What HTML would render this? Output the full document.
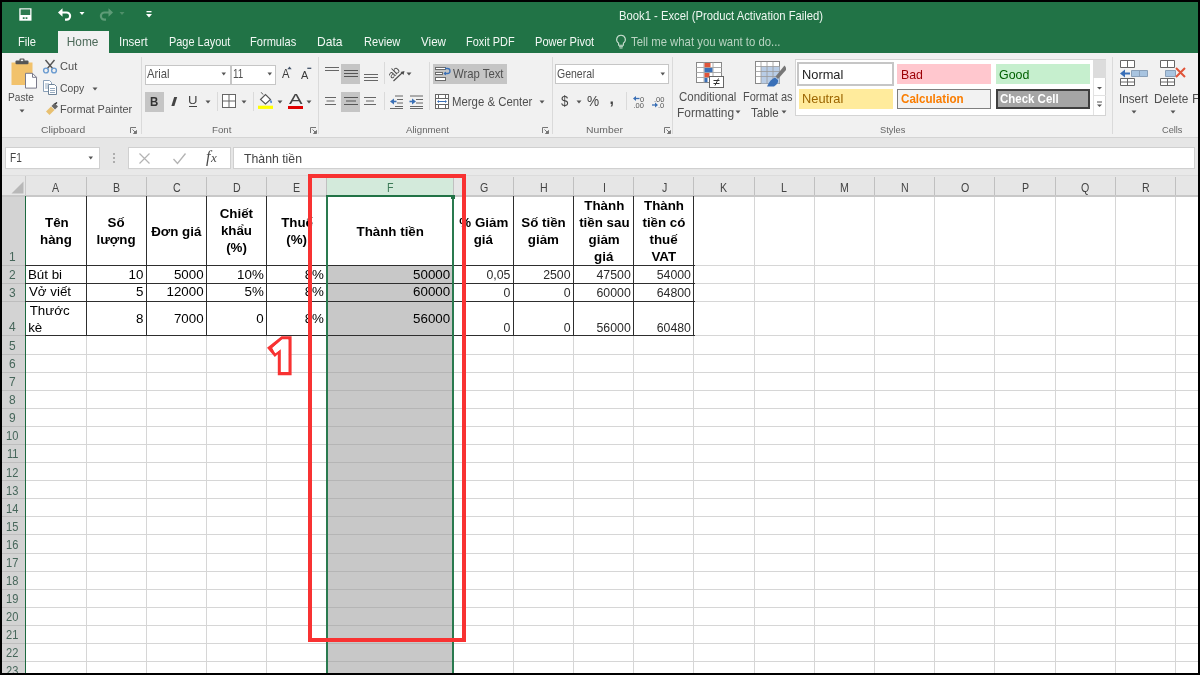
<!DOCTYPE html><html><head><meta charset="utf-8"><style>
html,body{margin:0;padding:0;}
body{width:1200px;height:675px;position:relative;overflow:hidden;background:#fff;font-family:"Liberation Sans",sans-serif;}
body>*{position:absolute;}
body{will-change:transform;}
span{white-space:pre;display:block;}
</style></head><body>
<div style="left:0px;top:0px;width:1200px;height:52.5px;background:#217346;"></div>
<div style="left:58px;top:31px;width:51px;height:22px;background:#f1f1f1;"></div>
<div style="left:0px;top:52.5px;width:1200px;height:84.5px;background:#f1f1f1;"></div>
<div style="left:0px;top:136.5px;width:1200px;height:1.2px;background:#d4d4d4;"></div>
<div style="left:0px;top:137.7px;width:1200px;height:37.3px;background:#e6e6e6;"></div>
<span style="left:619.10px;top:10px;font-size:12.03px;line-height:12.03px;color:#eef7f1;transform:scaleX(0.9375);transform-origin:0 0;">Book1 - Excel (Product Activation Failed)</span>
<span style="left:17.81px;top:37px;font-size:11.88px;line-height:11.88px;color:#f2f8f4;transform:scaleX(0.9406);transform-origin:0 0;">File</span>
<span style="left:118.96px;top:37px;font-size:11.88px;line-height:11.88px;color:#f2f8f4;transform:scaleX(0.9692);transform-origin:0 0;">Insert</span>
<span style="left:168.62px;top:37px;font-size:11.88px;line-height:11.88px;color:#f2f8f4;transform:scaleX(0.9206);transform-origin:0 0;">Page Layout</span>
<span style="left:250.11px;top:37px;font-size:11.88px;line-height:11.88px;color:#f2f8f4;transform:scaleX(0.9338);transform-origin:0 0;">Formulas</span>
<span style="left:317.03px;top:37px;font-size:11.88px;line-height:11.88px;color:#f2f8f4;transform:scaleX(1.0156);transform-origin:0 0;">Data</span>
<span style="left:363.61px;top:37px;font-size:11.88px;line-height:11.88px;color:#f2f8f4;transform:scaleX(0.9335);transform-origin:0 0;">Review</span>
<span style="left:420.94px;top:37px;font-size:11.88px;line-height:11.88px;color:#f2f8f4;transform:scaleX(0.9807);transform-origin:0 0;">View</span>
<span style="left:465.83px;top:37px;font-size:11.88px;line-height:11.88px;color:#f2f8f4;transform:scaleX(0.9203);transform-origin:0 0;">Foxit PDF</span>
<span style="left:534.81px;top:37px;font-size:11.88px;line-height:11.88px;color:#f2f8f4;transform:scaleX(0.9344);transform-origin:0 0;">Power Pivot</span>
<span style="left:66.75px;top:37px;font-size:11.88px;line-height:11.88px;color:#4d6a5a;">Home</span>
<span style="left:631.47px;top:37px;font-size:11.88px;line-height:11.88px;color:#b9d4c2;transform:scaleX(0.9555);transform-origin:0 0;">Tell me what you want to do...</span>
<svg style="left:18.5px;top:7.5px" width="13" height="13" viewBox="0 0 13 13"><rect x="0.3" y="0.3" width="12.2" height="12.4" fill="#fff"/><rect x="1.6" y="1.4" width="9.6" height="5.6" fill="#2e7a50"/><rect x="3.8" y="9.3" width="1.8" height="1.6" fill="#217346"/><rect x="6.6" y="9.3" width="1.8" height="1.6" fill="#217346"/></svg>
<svg style="left:57px;top:7px" width="17" height="14" viewBox="0 0 17 14"><path d="M3 5.5h6.5a3.6 3.6 0 0 1 0 7.2h-1.5" fill="none" stroke="#fff" stroke-width="2.2"/><path d="M1 5.5l4.5-4.2v8.4z" fill="#fff"/></svg>
<svg style="left:79px;top:11px" width="7" height="5" viewBox="0 0 7 5"><path d="M0.5 1h5l-2.5 3z" fill="#fff"/></svg>
<svg style="left:97px;top:7px" width="17" height="14" viewBox="0 0 17 14"><path d="M14 5.5h-6.5a3.6 3.6 0 0 0 0 7.2h1.5" fill="none" stroke="#5e9b77" stroke-width="2.2"/><path d="M16 5.5l-4.5-4.2v8.4z" fill="#5e9b77"/></svg>
<svg style="left:119px;top:11px" width="7" height="5" viewBox="0 0 7 5"><path d="M0.5 1h5l-2.5 3z" fill="#4f8f69"/></svg>
<svg style="left:145px;top:10px" width="8" height="8" viewBox="0 0 8 8"><rect x="1.5" y="1" width="5" height="1.3" fill="#fff"/><path d="M1 4h6l-3 3.5z" fill="#fff"/></svg>
<svg style="left:615px;top:34px" width="12" height="15" viewBox="0 0 12 15"><path d="M6 1.2a4.3 4.3 0 0 0-2.4 7.9v2.2h4.8V9.1A4.3 4.3 0 0 0 6 1.2z" fill="none" stroke="#c9dfd0" stroke-width="1.1"/><path d="M4 12.7h4M4.5 14h3" stroke="#c9dfd0" stroke-width="1"/></svg>
<div style="left:140.5px;top:57px;width:1.0px;height:77px;background:#dadada;"></div>
<div style="left:318px;top:57px;width:1px;height:77px;background:#dadada;"></div>
<div style="left:552px;top:57px;width:1px;height:77px;background:#dadada;"></div>
<div style="left:672.3px;top:57px;width:1.0px;height:77px;background:#dadada;"></div>
<div style="left:1111.6px;top:57px;width:1.0px;height:77px;background:#dadada;"></div>
<svg style="left:10px;top:58px" width="28" height="31" viewBox="0 0 28 31"><rect x="1.5" y="4.5" width="21" height="22.5" fill="#f2c26c"/>
<rect x="5.5" y="2.5" width="13" height="3.8" rx="1" fill="#555"/><rect x="9.5" y="0.5" width="5" height="3" rx="1" fill="#555"/><rect x="10.8" y="1.6" width="2.4" height="1.5" fill="#f1f1f1"/>
<path d="M15.5 15.3h7l4 4v10.8h-11z" fill="#fff" stroke="#7a7a8a" stroke-width="1"/><path d="M22.5 15.3v4h4" fill="none" stroke="#7a7a8a" stroke-width="1"/></svg>
<span style="left:8.49px;top:92px;font-size:11.16px;line-height:11.16px;color:#505050;transform:scaleX(0.9072);transform-origin:0 0;">Paste</span>
<svg style="left:18.8px;top:109.3px" width="6" height="4" viewBox="0 0 6 4"><path d="M0.5 0.5h5l-2.5 3z" fill="#555"/></svg>
<svg style="left:42px;top:59px" width="16" height="15" viewBox="0 0 16 15"><path d="M3.5 1l7.5 9M12.5 1L5 10" stroke="#555" stroke-width="1.4"/><circle cx="4" cy="11.5" r="2.4" fill="none" stroke="#6a9bd0" stroke-width="1.4"/><circle cx="12" cy="11.5" r="2.4" fill="none" stroke="#6a9bd0" stroke-width="1.4"/></svg>
<span style="left:60.05px;top:61px;font-size:10.87px;line-height:10.87px;color:#505050;transform:scaleX(1.0181);transform-origin:0 0;">Cut</span>
<svg style="left:42px;top:79px" width="16" height="16" viewBox="0 0 16 16"><path d="M1.5 1.5h6l2 2v9h-8z" fill="#fff" stroke="#8aa0b8" stroke-width="1"/><path d="M6.5 5.5h6l2 2v8h-8z" fill="#fff" stroke="#6f8499" stroke-width="1"/><path d="M3 5h4M3 7h4M3 9h3M8 9.5h5M8 11.5h5M8 13.5h5" stroke="#8aa0b8" stroke-width="0.9"/></svg>
<span style="left:60.28px;top:83px;font-size:10.87px;line-height:10.87px;color:#505050;transform:scaleX(0.9582);transform-origin:0 0;">Copy</span>
<svg style="left:92.0px;top:86.5px" width="6" height="4" viewBox="0 0 6 4"><path d="M0.5 0.5h5l-2.5 3z" fill="#555"/></svg>
<svg style="left:44px;top:102px" width="15" height="14" viewBox="0 0 15 14"><path d="M2 9.5l5-5 3.5 3.5-5 5z" fill="#e8c070"/><path d="M7.5 4l3-3 3.5 3.5-3 3z" fill="#666"/><path d="M11 2l2-1.5" stroke="#333" stroke-width="1.5"/></svg>
<span style="left:59.93px;top:104px;font-size:11.30px;line-height:11.30px;color:#505050;transform:scaleX(0.9668);transform-origin:0 0;">Format Painter</span>
<span style="left:41.28px;top:125px;font-size:9.86px;line-height:9.86px;color:#666666;transform:scaleX(1.0476);transform-origin:0 0;">Clipboard</span>
<svg style="left:130px;top:127px" width="7" height="7" viewBox="0 0 7 7"><path d="M0.5 0.5h5.5M0.5 0.5v5.5" stroke="#777" stroke-width="1" fill="none"/><path d="M2.5 2.5L6.2 6.2M6.5 3.5v3h-3z" stroke="#777" stroke-width="1" fill="#777"/></svg>
<div style="left:144.5px;top:64.5px;width:86.5px;height:20.0px;background:#fff;border:1px solid #c6c6c6;box-sizing:border-box;"></div>
<div style="left:230.5px;top:64.5px;width:45.0px;height:20.0px;background:#fff;border:1px solid #c6c6c6;box-sizing:border-box;"></div>
<span style="left:147.20px;top:68px;font-size:12.17px;line-height:12.17px;color:#505050;transform:scaleX(0.9254);transform-origin:0 0;">Arial</span>
<span style="left:233.26px;top:69px;font-size:11.88px;line-height:11.88px;color:#505050;transform:scaleX(0.8277);transform-origin:0 0;">11</span>
<svg style="left:220.95px;top:71.6px" width="5.5" height="4" viewBox="0 0 5.5 4"><path d="M0.5 0.5h4.5l-2.25 3z" fill="#555"/></svg>
<svg style="left:266.85px;top:71.6px" width="5.5" height="4" viewBox="0 0 5.5 4"><path d="M0.5 0.5h4.5l-2.25 3z" fill="#555"/></svg>
<span style="left:281.80px;top:68px;font-size:12.17px;line-height:12.17px;color:#3a3a3a;transform:scaleX(0.9264);transform-origin:0 0;">A</span>
<svg style="left:287px;top:66px" width="5" height="4" viewBox="0 0 5 4"><path d="M0.3 3.2l2.2-2.6 2.2 2.6z" fill="#44546a"/></svg>
<span style="left:300.70px;top:70px;font-size:11.59px;line-height:11.59px;color:#3a3a3a;transform:scaleX(0.9468);transform-origin:0 0;">A</span>
<svg style="left:306.5px;top:67px" width="5" height="3" viewBox="0 0 5 3"><path d="M0.3 1.3h4" stroke="#44546a" stroke-width="1.3"/></svg>
<div style="left:144.8px;top:92px;width:19.2px;height:19.5px;background:#c5c5c5;"></div>
<span style="left:149.55px;top:96px;font-size:12.03px;line-height:12.03px;color:#333;font-weight:bold;transform:scaleX(0.9540);transform-origin:0 0;">B</span>
<span style="left:170.58px;top:96px;font-size:12.03px;line-height:12.03px;color:#444;font-weight:bold;font-style:italic;transform:scaleX(1.7533);transform-origin:0 0;">I</span>
<span style="left:188.01px;top:95px;font-size:11.30px;line-height:11.30px;color:#444;transform:scaleX(1.1640);transform-origin:0 0;">U</span>
<div style="left:189px;top:106.2px;width:7.7px;height:1.1px;background:#444;"></div>
<svg style="left:204.5px;top:99.8px" width="6" height="4" viewBox="0 0 6 4"><path d="M0.5 0.5h5l-2.5 3z" fill="#555"/></svg>
<div style="left:216.5px;top:92px;width:1.0px;height:19px;background:#dadada;"></div>
<svg style="left:221px;top:93px" width="16" height="16" viewBox="0 0 16 16"><rect x="1.5" y="1.5" width="13" height="13" fill="#fff" stroke="#666" stroke-width="1"/><path d="M8 1.5v13M1.5 8h13" stroke="#666" stroke-width="1"/></svg>
<svg style="left:241.0px;top:99.8px" width="6" height="4" viewBox="0 0 6 4"><path d="M0.5 0.5h5l-2.5 3z" fill="#555"/></svg>
<div style="left:252.5px;top:92px;width:1.0px;height:19px;background:#dadada;"></div>
<svg style="left:256px;top:91px" width="19" height="19" viewBox="0 0 19 19"><path d="M4.5 8.5l5-5 5 5-5 4.5z" fill="#fff" stroke="#555" stroke-width="1.1"/><path d="M7 3.5l-1.8-2.2" stroke="#555" stroke-width="1"/><path d="M14.5 8.5c1.5 1.6 1.8 2.8 1 3.5-.8.6-1.7-.4-1-3.5z" fill="#3a7ad0"/><rect x="2" y="14.7" width="15" height="3.2" fill="#ffff00"/></svg>
<svg style="left:277.0px;top:99.8px" width="6" height="4" viewBox="0 0 6 4"><path d="M0.5 0.5h5l-2.5 3z" fill="#555"/></svg>
<span style="left:288.50px;top:91px;font-size:15.22px;line-height:15.22px;color:#444;transform:scaleX(1.3340);transform-origin:0 0;">A</span>
<div style="left:287.8px;top:105.7px;width:15.2px;height:3.2px;background:#e00000;"></div>
<svg style="left:306.0px;top:99.8px" width="6" height="4" viewBox="0 0 6 4"><path d="M0.5 0.5h5l-2.5 3z" fill="#555"/></svg>
<span style="left:212.22px;top:125px;font-size:9.86px;line-height:9.86px;color:#666666;transform:scaleX(0.9856);transform-origin:0 0;">Font</span>
<svg style="left:309.5px;top:127px" width="7" height="7" viewBox="0 0 7 7"><path d="M0.5 0.5h5.5M0.5 0.5v5.5" stroke="#777" stroke-width="1" fill="none"/><path d="M2.5 2.5L6.2 6.2M6.5 3.5v3h-3z" stroke="#777" stroke-width="1" fill="#777"/></svg>
<svg style="left:324.5px;top:67px" width="14" height="6" viewBox="0 0 14 6"><rect x="0.0" y="0" width="14" height="1" fill="#666"/><rect x="0.0" y="3" width="14" height="1" fill="#666"/></svg>
<div style="left:341px;top:64px;width:19px;height:20px;background:#c5c5c5;"></div>
<svg style="left:343.5px;top:70px" width="14" height="9" viewBox="0 0 14 9"><rect x="0.0" y="0" width="14" height="1" fill="#555"/><rect x="0.0" y="3" width="14" height="1" fill="#555"/><rect x="0.0" y="6" width="14" height="1" fill="#555"/></svg>
<svg style="left:363.5px;top:74px" width="14" height="9" viewBox="0 0 14 9"><rect x="0.0" y="0" width="14" height="1" fill="#666"/><rect x="0.0" y="3" width="14" height="1" fill="#666"/><rect x="0.0" y="6" width="14" height="1" fill="#666"/></svg>
<div style="left:383.6px;top:62px;width:1.0px;height:22px;background:#dadada;"></div>
<svg style="left:386px;top:63px" width="22" height="20" viewBox="0 0 22 20"><text x="2" y="13" font-size="11" font-family="Liberation Sans" fill="#4a4a4a" transform="rotate(-45 8 10)">ab</text><path d="M7.5 18l9-8.5" stroke="#4a4a4a" stroke-width="1.1"/><path d="M18.5 8l-4 1 3 3z" fill="#4a4a4a"/></svg>
<svg style="left:406.0px;top:71.5px" width="6" height="4" viewBox="0 0 6 4"><path d="M0.5 0.5h5l-2.5 3z" fill="#555"/></svg>
<div style="left:429px;top:62px;width:1px;height:48px;background:#dadada;"></div>
<div style="left:433px;top:64px;width:74px;height:20px;background:#c5c5c5;"></div>
<svg style="left:434px;top:65px" width="18" height="18" viewBox="0 0 18 18"><rect x="1.5" y="2.5" width="10" height="2" fill="#fff" stroke="#6b6b6b" stroke-width="1"/><rect x="1.5" y="7.5" width="7" height="2" fill="#fff" stroke="#6b6b6b" stroke-width="1"/><rect x="1.5" y="12.5" width="10" height="3" fill="#fff" stroke="#6b6b6b" stroke-width="1"/><path d="M11 3.5h2.5a2.5 2.5 0 0 1 0 5H10" fill="none" stroke="#3a6fb5" stroke-width="1.3"/><path d="M9.5 8.5l2.5-2v4z" fill="#3a6fb5"/></svg>
<span style="left:452.54px;top:68px;font-size:12.17px;line-height:12.17px;color:#505050;transform:scaleX(0.9303);transform-origin:0 0;">Wrap Text</span>
<svg style="left:325px;top:97px" width="11" height="10.5" viewBox="0 0 11 10.5"><rect x="0.0" y="0.0" width="11" height="1" fill="#666"/><rect x="1.5" y="3.5" width="8" height="1" fill="#666"/><rect x="0.0" y="7.0" width="11" height="1" fill="#666"/></svg>
<div style="left:341px;top:92px;width:19px;height:19.6px;background:#c5c5c5;"></div>
<svg style="left:343.5px;top:97px" width="14" height="10.5" viewBox="0 0 14 10.5"><rect x="0.0" y="0.0" width="14" height="1" fill="#555"/><rect x="2.0" y="3.5" width="10" height="1" fill="#555"/><rect x="0.0" y="7.0" width="14" height="1" fill="#555"/></svg>
<svg style="left:364px;top:97px" width="12" height="10.5" viewBox="0 0 12 10.5"><rect x="0.0" y="0.0" width="12" height="1" fill="#666"/><rect x="2.0" y="3.5" width="8" height="1" fill="#666"/><rect x="0.0" y="7.0" width="12" height="1" fill="#666"/></svg>
<div style="left:383.6px;top:92px;width:1.0px;height:18px;background:#dadada;"></div>
<svg style="left:389px;top:95px" width="15" height="14" viewBox="0 0 15 14"><path d="M6 1h8M8 4.5h6M8 8h6M6 11.5h8M1 13.5h13" stroke="#666" stroke-width="1"/><path d="M1 6.5l4-3v6z" fill="#3a6fb5"/><path d="M4 6.5h3.5" stroke="#3a6fb5" stroke-width="1.6"/></svg>
<svg style="left:409px;top:95px" width="15" height="14" viewBox="0 0 15 14"><path d="M1 1h13M7 4.5h7M7 8h7M1 11.5h13M1 13.5h13" stroke="#666" stroke-width="1"/><path d="M7 6.5l-4-3v6z" fill="#3a6fb5"/><path d="M0.5 6.5h3.5" stroke="#3a6fb5" stroke-width="1.6"/></svg>
<svg style="left:434px;top:93px" width="16" height="17" viewBox="0 0 16 17"><rect x="1.5" y="1.5" width="13" height="14" fill="#fff" stroke="#666" stroke-width="1"/><path d="M1.5 5.5h13M1.5 11.5h13M4.5 1.5v4M11.5 1.5v4M4.5 11.5v4M11.5 11.5v4" stroke="#666" stroke-width="1"/><path d="M4 8.5h8" stroke="#3a6fb5" stroke-width="1"/><path d="M3 8.5l2-1.5v3zM13 8.5l-2-1.5v3z" fill="#3a6fb5"/></svg>
<span style="left:451.69px;top:96px;font-size:12.17px;line-height:12.17px;color:#505050;transform:scaleX(0.9371);transform-origin:0 0;">Merge & Center</span>
<svg style="left:538.6px;top:99.8px" width="6" height="4" viewBox="0 0 6 4"><path d="M0.5 0.5h5l-2.5 3z" fill="#555"/></svg>
<span style="left:406.00px;top:125px;font-size:9.86px;line-height:9.86px;color:#666666;transform:scaleX(0.9827);transform-origin:0 0;">Alignment</span>
<svg style="left:542px;top:127px" width="7" height="7" viewBox="0 0 7 7"><path d="M0.5 0.5h5.5M0.5 0.5v5.5" stroke="#777" stroke-width="1" fill="none"/><path d="M2.5 2.5L6.2 6.2M6.5 3.5v3h-3z" stroke="#777" stroke-width="1" fill="#777"/></svg>
<div style="left:555px;top:64.4px;width:113.5px;height:19.8px;background:#fff;border:1px solid #c6c6c6;box-sizing:border-box;"></div>
<span style="left:557.27px;top:68px;font-size:12.17px;line-height:12.17px;color:#505050;transform:scaleX(0.8644);transform-origin:0 0;">General</span>
<svg style="left:660.25px;top:71.6px" width="5.5" height="4" viewBox="0 0 5.5 4"><path d="M0.5 0.5h4.5l-2.25 3z" fill="#555"/></svg>
<span style="left:560.57px;top:95px;font-size:13.77px;line-height:13.77px;color:#444;transform:scaleX(0.9593);transform-origin:0 0;">$</span>
<svg style="left:575.7px;top:99.8px" width="6" height="4" viewBox="0 0 6 4"><path d="M0.5 0.5h5l-2.5 3z" fill="#555"/></svg>
<span style="left:587.32px;top:95px;font-size:13.77px;line-height:13.77px;color:#444;transform:scaleX(0.9920);transform-origin:0 0;">%</span>
<span style="left:609.38px;top:91px;font-size:16.00px;line-height:16.00px;color:#444;font-weight:bold;">,</span>
<div style="left:626px;top:92px;width:1px;height:18px;background:#dadada;"></div>
<svg style="left:632px;top:95px" width="15" height="13" viewBox="0 0 15 13"><path d="M1 3.5l3-2.5v5z" fill="#3a6fb5"/><path d="M3.5 3.5h4" stroke="#3a6fb5" stroke-width="1.3"/><text x="8" y="6.5" font-size="7.5" font-family="Liberation Sans" fill="#555">0</text><text x="1.5" y="12.8" font-size="7.5" font-family="Liberation Sans" fill="#555">.00</text></svg>
<svg style="left:651px;top:95px" width="15" height="13" viewBox="0 0 15 13"><text x="3" y="6.5" font-size="7.5" font-family="Liberation Sans" fill="#555">.00</text><path d="M1 10h4" stroke="#3a6fb5" stroke-width="1.3"/><path d="M7 10l-3-2.5v5z" fill="#3a6fb5"/><text x="7" y="12.8" font-size="7.5" font-family="Liberation Sans" fill="#555">.0</text></svg>
<span style="left:585.67px;top:125px;font-size:9.86px;line-height:9.86px;color:#666666;transform:scaleX(1.0528);transform-origin:0 0;">Number</span>
<svg style="left:664px;top:127px" width="7" height="7" viewBox="0 0 7 7"><path d="M0.5 0.5h5.5M0.5 0.5v5.5" stroke="#777" stroke-width="1" fill="none"/><path d="M2.5 2.5L6.2 6.2M6.5 3.5v3h-3z" stroke="#777" stroke-width="1" fill="#777"/></svg>
<svg style="left:695px;top:61px" width="30" height="28" viewBox="0 0 30 28"><rect x="1.5" y="1.5" width="25" height="20" fill="#fff" stroke="#888" stroke-width="1"/>
<path d="M1.5 6.5h25M1.5 11.5h25M1.5 16.5h25M9 1.5v20M18 1.5v20" stroke="#aaa" stroke-width="1"/>
<rect x="9.5" y="2" width="6" height="4.2" fill="#e0553a"/><rect x="9.5" y="7" width="8" height="4.2" fill="#3a70b8"/><rect x="9.5" y="12" width="5" height="4.2" fill="#e0553a"/><rect x="9.5" y="17" width="3" height="4.2" fill="#3a70b8"/>
<rect x="14.5" y="15.5" width="14" height="11" fill="#fff" stroke="#666" stroke-width="1"/><path d="M18.5 19.5h6M18.5 22.5h6M20 24.5l3.5-7" stroke="#333" stroke-width="1"/></svg>
<span style="left:679.43px;top:92px;font-size:11.88px;line-height:11.88px;color:#505050;transform:scaleX(0.9646);transform-origin:0 0;">Conditional</span>
<span style="left:676.64px;top:108px;font-size:11.88px;line-height:11.88px;color:#505050;transform:scaleX(1.0058);transform-origin:0 0;">Formatting</span>
<svg style="left:734.5px;top:110px" width="6" height="4" viewBox="0 0 6 4"><path d="M0.5 0.5h5l-2.5 3z" fill="#555"/></svg>
<svg style="left:754px;top:60px" width="32" height="29" viewBox="0 0 32 29"><rect x="1.5" y="1.5" width="24" height="22" fill="#fff" stroke="#888" stroke-width="1"/>
<rect x="7" y="6.5" width="18.5" height="17" fill="#b9cde6"/>
<path d="M1.5 6.5h24M1.5 11.5h24M1.5 16.5h24M7 1.5v22M13 1.5v22M19 1.5v22" stroke="#999" stroke-width="0.8"/>
<path d="M30.5 5.5l-9 11 2.5 2.5 9-10z" fill="#777"/><path d="M21 17.5c-3 1-6 4-8 9h7c3-2 4.5-4 4-6.5z" fill="#3a70b8"/></svg>
<span style="left:742.82px;top:92px;font-size:11.88px;line-height:11.88px;color:#505050;transform:scaleX(0.9269);transform-origin:0 0;">Format as</span>
<span style="left:750.77px;top:108px;font-size:11.88px;line-height:11.88px;color:#505050;transform:scaleX(0.9772);transform-origin:0 0;">Table</span>
<svg style="left:781.0px;top:110px" width="6" height="4" viewBox="0 0 6 4"><path d="M0.5 0.5h5l-2.5 3z" fill="#555"/></svg>
<div style="left:795.3px;top:58.5px;width:310.7px;height:57.0px;background:#fff;border:1px solid #d4d4d4;box-sizing:border-box;"></div>
<div style="left:797.4px;top:62.4px;width:96.6px;height:23.2px;background:#fff;border:2px solid #c6c6c6;box-sizing:border-box;"></div>
<span style="left:801.97px;top:69px;font-size:12.17px;line-height:12.17px;color:#222;transform:scaleX(1.0552);transform-origin:0 0;">Normal</span>
<div style="left:897px;top:63.75px;width:94px;height:20.25px;background:#ffc7ce;"></div>
<span style="left:900.81px;top:69px;font-size:12.17px;line-height:12.17px;color:#9c0006;transform:scaleX(1.0149);transform-origin:0 0;">Bad</span>
<div style="left:996px;top:64px;width:93.6px;height:20px;background:#c6efce;"></div>
<span style="left:999.38px;top:69px;font-size:12.17px;line-height:12.17px;color:#006100;transform:scaleX(1.0224);transform-origin:0 0;">Good</span>
<div style="left:798.75px;top:88.6px;width:94.25px;height:20.4px;background:#ffeb9c;"></div>
<span style="left:801.97px;top:93px;font-size:12.17px;line-height:12.17px;color:#9c6500;transform:scaleX(1.0552);transform-origin:0 0;">Neutral</span>
<div style="left:897px;top:88.6px;width:94px;height:20.4px;background:#f2f2f2;border:1px solid #7f7f7f;box-sizing:border-box;"></div>
<span style="left:901.03px;top:93px;font-size:12.17px;line-height:12.17px;color:#fa7d00;font-weight:bold;transform:scaleX(0.9550);transform-origin:0 0;">Calculation</span>
<div style="left:996px;top:89px;width:93.6px;height:20px;background:#a5a5a5;border:2px solid #3f3f3f;box-sizing:border-box;"></div>
<span style="left:999.54px;top:93px;font-size:12.17px;line-height:12.17px;color:#ffffff;font-weight:bold;transform:scaleX(0.9437);transform-origin:0 0;">Check Cell</span>
<div style="left:1093px;top:59.5px;width:12.5px;height:18.5px;background:#dcdcdc;"></div>
<div style="left:1093px;top:78px;width:1px;height:36.6px;background:#e2e2e2;"></div>
<div style="left:1093px;top:95px;width:12.5px;height:1px;background:#e2e2e2;"></div>
<svg style="left:1095px;top:80px" width="9" height="14" viewBox="0 0 9 14"><path d="M2 7h5l-2.5 2.5z" fill="#555"/></svg>
<svg style="left:1095px;top:97px" width="9" height="14" viewBox="0 0 9 14"><path d="M2 5h5" stroke="#555" stroke-width="1"/><path d="M2 7.5h5l-2.5 2.5z" fill="#555"/></svg>
<span style="left:879.58px;top:125px;font-size:9.86px;line-height:9.86px;color:#666666;transform:scaleX(0.9437);transform-origin:0 0;">Styles</span>
<svg style="left:1119px;top:59px" width="30" height="28" viewBox="0 0 30 28"><path d="M1.5 1.5h14v7h-14zM8.5 1.5v7" fill="#fff" stroke="#666" stroke-width="1"/>
<path d="M12.5 11.5h16v6h-16zM20.5 11.5v6" fill="#a8c4e0" stroke="#8aa0b8" stroke-width="1"/>
<path d="M1 14.5l5-4v8z" fill="#3a70b8"/><path d="M5 14.5h6" stroke="#3a70b8" stroke-width="2"/>
<path d="M1.5 19.5h14v7h-14zM1.5 23h14M8.5 19.5v7" fill="#fff" stroke="#666" stroke-width="1"/></svg>
<span style="left:1118.95px;top:94px;font-size:11.88px;line-height:11.88px;color:#505050;transform:scaleX(0.9797);transform-origin:0 0;">Insert</span>
<svg style="left:1131.0px;top:110px" width="6" height="4" viewBox="0 0 6 4"><path d="M0.5 0.5h5l-2.5 3z" fill="#555"/></svg>
<svg style="left:1159px;top:59px" width="30" height="28" viewBox="0 0 30 28"><path d="M1.5 1.5h14v7h-14zM8.5 1.5v7" fill="#fff" stroke="#666" stroke-width="1"/>
<path d="M6.5 11.5h10v6h-10z" fill="#a8c4e0" stroke="#8aa0b8" stroke-width="1"/>
<path d="M1.5 19.5h14v7h-14zM1.5 23h14M8.5 19.5v7" fill="#fff" stroke="#666" stroke-width="1"/>
<path d="M17 9l9 9M26 9l-9 9" stroke="#e0553a" stroke-width="2"/></svg>
<span style="left:1154.05px;top:94px;font-size:11.88px;line-height:11.88px;color:#505050;">Delete</span>
<svg style="left:1170.0px;top:110px" width="6" height="4" viewBox="0 0 6 4"><path d="M0.5 0.5h5l-2.5 3z" fill="#555"/></svg>
<span style="left:1191.67px;top:94px;font-size:11.88px;line-height:11.88px;color:#505050;transform:scaleX(1.0819);transform-origin:0 0;">F</span>
<span style="left:1161.54px;top:125px;font-size:9.86px;line-height:9.86px;color:#666666;transform:scaleX(0.9341);transform-origin:0 0;">Cells</span>
<div style="left:5px;top:147.3px;width:94.5px;height:22.2px;background:#fff;border:1px solid #d0d0d0;box-sizing:border-box;"></div>
<span style="left:9.69px;top:152px;font-size:12.17px;line-height:12.17px;color:#444;transform:scaleX(0.8293);transform-origin:0 0;">F1</span>
<svg style="left:87.75px;top:155.5px" width="5.5" height="4" viewBox="0 0 5.5 4"><path d="M0.5 0.5h4.5l-2.25 3z" fill="#555"/></svg>
<div style="left:113px;top:152.7px;width:2px;height:2.0px;background:#9a9a9a;border-radius:1px;"></div>
<div style="left:113px;top:156.8px;width:2px;height:2.0px;background:#9a9a9a;border-radius:1px;"></div>
<div style="left:113px;top:160.6px;width:2px;height:2.0px;background:#9a9a9a;border-radius:1px;"></div>
<div style="left:128px;top:147.3px;width:102.5px;height:22.2px;background:#fff;border:1px solid #d0d0d0;box-sizing:border-box;"></div>
<svg style="left:138px;top:152px" width="14" height="13" viewBox="0 0 14 13"><path d="M1.5 1.5l10 10M11.5 1.5l-10 10" stroke="#b3b3b3" stroke-width="1.2"/></svg>
<svg style="left:172px;top:152px" width="15" height="13" viewBox="0 0 15 13"><path d="M1.5 7l4 4.5 8-10" fill="none" stroke="#b3b3b3" stroke-width="1.3"/></svg>
<span style="left:206px;top:149px;font-family:'Liberation Serif',serif;font-style:italic;font-size:16px;line-height:16px;color:#4a4a4a;letter-spacing:0.5px">f<b style="display:inline;font-weight:normal;font-size:13px;">x</b></span>
<div style="left:233px;top:147.3px;width:962px;height:22.2px;background:#fff;border:1px solid #d0d0d0;box-sizing:border-box;"></div>
<span style="left:243.75px;top:153px;font-size:12.17px;line-height:12.17px;color:#444;transform:scaleX(1.0091);transform-origin:0 0;">Thành tiền</span>
<div style="left:0px;top:169.5px;width:1200px;height:5.5px;background:#e9e9e9;"></div>
<div style="left:0px;top:174.5px;width:1200px;height:1.0px;background:#dcdcdc;"></div>
<div style="left:2px;top:175.5px;width:1198px;height:20.0px;background:#e6e6e6;"></div>
<div style="left:2px;top:195px;width:1198px;height:1.5px;background:#c8c8c8;"></div>
<svg style="left:10px;top:180px" width="15" height="15" viewBox="0 0 15 15"><path d="M13.5 1.5v12h-12z" fill="#b8b8b8"/></svg>
<div style="left:24.5px;top:176px;width:1.0px;height:19px;background:#c8c8c8;"></div>
<div style="left:85.5px;top:177px;width:1.0px;height:18px;background:#c0c0c0;"></div>
<div style="left:145.7px;top:177px;width:1.0px;height:18px;background:#c0c0c0;"></div>
<div style="left:205.9px;top:177px;width:1.0px;height:18px;background:#c0c0c0;"></div>
<div style="left:266.1px;top:177px;width:1.0px;height:18px;background:#c0c0c0;"></div>
<div style="left:326.3px;top:177px;width:1.0px;height:18px;background:#c0c0c0;"></div>
<div style="left:452.5px;top:177px;width:1.0px;height:18px;background:#c0c0c0;"></div>
<div style="left:512.7px;top:177px;width:1.0px;height:18px;background:#c0c0c0;"></div>
<div style="left:572.9px;top:177px;width:1.0px;height:18px;background:#c0c0c0;"></div>
<div style="left:633.1px;top:177px;width:1.0px;height:18px;background:#c0c0c0;"></div>
<div style="left:693.3px;top:177px;width:1.0px;height:18px;background:#c0c0c0;"></div>
<div style="left:753.5px;top:177px;width:1.0px;height:18px;background:#c0c0c0;"></div>
<div style="left:813.7px;top:177px;width:1.0px;height:18px;background:#c0c0c0;"></div>
<div style="left:873.9px;top:177px;width:1.0px;height:18px;background:#c0c0c0;"></div>
<div style="left:934.1px;top:177px;width:1.0px;height:18px;background:#c0c0c0;"></div>
<div style="left:994.3px;top:177px;width:1.0px;height:18px;background:#c0c0c0;"></div>
<div style="left:1054.5px;top:177px;width:1.0px;height:18px;background:#c0c0c0;"></div>
<div style="left:1114.7px;top:177px;width:1.0px;height:18px;background:#c0c0c0;"></div>
<div style="left:1174.9px;top:177px;width:1.0px;height:18px;background:#c0c0c0;"></div>
<div style="left:1235.1px;top:177px;width:1.0px;height:18px;background:#c0c0c0;"></div>
<div style="left:327px;top:175.5px;width:126px;height:20.0px;background:#d3eadb;"></div>
<div style="left:326.3px;top:195px;width:127.2px;height:1.8px;background:#217346;"></div>
<span style="left:52.46px;top:181px;font-size:13.30px;line-height:13.30px;color:#444;transform:scaleX(0.8000);transform-origin:0 0;">A</span>
<span style="left:112.90px;top:181px;font-size:13.30px;line-height:13.30px;color:#444;transform:scaleX(0.8000);transform-origin:0 0;">B</span>
<span style="left:172.89px;top:181px;font-size:13.30px;line-height:13.30px;color:#444;transform:scaleX(0.8000);transform-origin:0 0;">C</span>
<span style="left:232.98px;top:181px;font-size:13.30px;line-height:13.30px;color:#444;transform:scaleX(0.8000);transform-origin:0 0;">D</span>
<span style="left:293.45px;top:181px;font-size:13.30px;line-height:13.30px;color:#444;transform:scaleX(0.8000);transform-origin:0 0;">E</span>
<span style="left:386.94px;top:181px;font-size:13.30px;line-height:13.30px;color:#3d7a57;transform:scaleX(0.8000);transform-origin:0 0;">F</span>
<span style="left:479.58px;top:181px;font-size:13.30px;line-height:13.30px;color:#444;transform:scaleX(0.8000);transform-origin:0 0;">G</span>
<span style="left:539.97px;top:181px;font-size:13.30px;line-height:13.30px;color:#444;transform:scaleX(0.8000);transform-origin:0 0;">H</span>
<span style="left:602.54px;top:181px;font-size:13.30px;line-height:13.30px;color:#444;transform:scaleX(0.8000);transform-origin:0 0;">I</span>
<span style="left:661.86px;top:181px;font-size:13.30px;line-height:13.30px;color:#444;transform:scaleX(0.8000);transform-origin:0 0;">J</span>
<span style="left:720.49px;top:181px;font-size:13.30px;line-height:13.30px;color:#444;transform:scaleX(0.8000);transform-origin:0 0;">K</span>
<span style="left:781.38px;top:181px;font-size:13.30px;line-height:13.30px;color:#444;transform:scaleX(0.8000);transform-origin:0 0;">L</span>
<span style="left:840.38px;top:181px;font-size:13.30px;line-height:13.30px;color:#444;transform:scaleX(0.8000);transform-origin:0 0;">M</span>
<span style="left:901.17px;top:181px;font-size:13.30px;line-height:13.30px;color:#444;transform:scaleX(0.8000);transform-origin:0 0;">N</span>
<span style="left:961.08px;top:181px;font-size:13.30px;line-height:13.30px;color:#444;transform:scaleX(0.8000);transform-origin:0 0;">O</span>
<span style="left:1021.70px;top:181px;font-size:13.30px;line-height:13.30px;color:#444;transform:scaleX(0.8000);transform-origin:0 0;">P</span>
<span style="left:1081.48px;top:181px;font-size:13.30px;line-height:13.30px;color:#444;transform:scaleX(0.8000);transform-origin:0 0;">Q</span>
<span style="left:1141.78px;top:181px;font-size:13.30px;line-height:13.30px;color:#444;transform:scaleX(0.8000);transform-origin:0 0;">R</span>
<span style="left:1202.46px;top:181px;font-size:13.30px;line-height:13.30px;color:#444;transform:scaleX(0.8000);transform-origin:0 0;">S</span>
<div style="left:2px;top:196.5px;width:23px;height:476.5px;background:#d3d3d3;"></div>
<div style="left:2px;top:265.0px;width:22.5px;height:1.0px;background:#bdbdbd;"></div>
<span style="left:8.90px;top:251px;font-size:12.60px;line-height:12.60px;color:#46665a;transform:scaleX(0.9500);transform-origin:0 0;">1</span>
<div style="left:2px;top:283.0px;width:22.5px;height:1.0px;background:#bdbdbd;"></div>
<span style="left:9.08px;top:269px;font-size:12.60px;line-height:12.60px;color:#46665a;transform:scaleX(0.9500);transform-origin:0 0;">2</span>
<div style="left:2px;top:301.0px;width:22.5px;height:1.0px;background:#bdbdbd;"></div>
<span style="left:9.08px;top:287px;font-size:12.60px;line-height:12.60px;color:#46665a;transform:scaleX(0.9500);transform-origin:0 0;">3</span>
<div style="left:2px;top:335.0px;width:22.5px;height:1.0px;background:#bdbdbd;"></div>
<span style="left:9.14px;top:321px;font-size:12.60px;line-height:12.60px;color:#46665a;transform:scaleX(0.9500);transform-origin:0 0;">4</span>
<div style="left:2px;top:353.8px;width:22.5px;height:1.0px;background:#bdbdbd;"></div>
<span style="left:9.08px;top:340px;font-size:12.60px;line-height:12.60px;color:#46665a;transform:scaleX(0.9500);transform-origin:0 0;">5</span>
<div style="left:2px;top:371.87px;width:22.5px;height:1.0px;background:#bdbdbd;"></div>
<span style="left:9.02px;top:358px;font-size:12.60px;line-height:12.60px;color:#46665a;transform:scaleX(0.9500);transform-origin:0 0;">6</span>
<div style="left:2px;top:389.93px;width:22.5px;height:1.0px;background:#bdbdbd;"></div>
<span style="left:9.08px;top:376px;font-size:12.60px;line-height:12.60px;color:#46665a;transform:scaleX(0.9500);transform-origin:0 0;">7</span>
<div style="left:2px;top:408.0px;width:22.5px;height:1.0px;background:#bdbdbd;"></div>
<span style="left:9.05px;top:394px;font-size:12.60px;line-height:12.60px;color:#46665a;transform:scaleX(0.9500);transform-origin:0 0;">8</span>
<div style="left:2px;top:426.06px;width:22.5px;height:1.0px;background:#bdbdbd;"></div>
<span style="left:9.08px;top:412px;font-size:12.60px;line-height:12.60px;color:#46665a;transform:scaleX(0.9500);transform-origin:0 0;">9</span>
<div style="left:2px;top:444.12px;width:22.5px;height:1.0px;background:#bdbdbd;"></div>
<span style="left:6.02px;top:430px;font-size:12.60px;line-height:12.60px;color:#46665a;transform:scaleX(0.8800);transform-origin:0 0;">10</span>
<div style="left:2px;top:462.19px;width:22.5px;height:1.0px;background:#bdbdbd;"></div>
<span style="left:6.50px;top:448px;font-size:12.60px;line-height:12.60px;color:#46665a;transform:scaleX(0.8800);transform-origin:0 0;">11</span>
<div style="left:2px;top:480.25px;width:22.5px;height:1.0px;background:#bdbdbd;"></div>
<span style="left:6.11px;top:467px;font-size:12.60px;line-height:12.60px;color:#46665a;transform:scaleX(0.8800);transform-origin:0 0;">12</span>
<div style="left:2px;top:498.32px;width:22.5px;height:1.0px;background:#bdbdbd;"></div>
<span style="left:6.05px;top:485px;font-size:12.60px;line-height:12.60px;color:#46665a;transform:scaleX(0.8800);transform-origin:0 0;">13</span>
<div style="left:2px;top:516.38px;width:22.5px;height:1.0px;background:#bdbdbd;"></div>
<span style="left:6.00px;top:503px;font-size:12.60px;line-height:12.60px;color:#46665a;transform:scaleX(0.8800);transform-origin:0 0;">14</span>
<div style="left:2px;top:534.45px;width:22.5px;height:1.0px;background:#bdbdbd;"></div>
<span style="left:6.05px;top:521px;font-size:12.60px;line-height:12.60px;color:#46665a;transform:scaleX(0.8800);transform-origin:0 0;">15</span>
<div style="left:2px;top:552.51px;width:22.5px;height:1.0px;background:#bdbdbd;"></div>
<span style="left:6.05px;top:539px;font-size:12.60px;line-height:12.60px;color:#46665a;transform:scaleX(0.8800);transform-origin:0 0;">16</span>
<div style="left:2px;top:570.58px;width:22.5px;height:1.0px;background:#bdbdbd;"></div>
<span style="left:6.11px;top:557px;font-size:12.60px;line-height:12.60px;color:#46665a;transform:scaleX(0.8800);transform-origin:0 0;">17</span>
<div style="left:2px;top:588.64px;width:22.5px;height:1.0px;background:#bdbdbd;"></div>
<span style="left:6.05px;top:575px;font-size:12.60px;line-height:12.60px;color:#46665a;transform:scaleX(0.8800);transform-origin:0 0;">18</span>
<div style="left:2px;top:606.71px;width:22.5px;height:1.0px;background:#bdbdbd;"></div>
<span style="left:6.08px;top:593px;font-size:12.60px;line-height:12.60px;color:#46665a;transform:scaleX(0.8800);transform-origin:0 0;">19</span>
<div style="left:2px;top:624.78px;width:22.5px;height:1.0px;background:#bdbdbd;"></div>
<span style="left:6.16px;top:611px;font-size:12.60px;line-height:12.60px;color:#46665a;transform:scaleX(0.8800);transform-origin:0 0;">20</span>
<div style="left:2px;top:642.84px;width:22.5px;height:1.0px;background:#bdbdbd;"></div>
<span style="left:6.22px;top:629px;font-size:12.60px;line-height:12.60px;color:#46665a;transform:scaleX(0.8800);transform-origin:0 0;">21</span>
<div style="left:2px;top:660.9px;width:22.5px;height:1.0px;background:#bdbdbd;"></div>
<span style="left:6.25px;top:647px;font-size:12.60px;line-height:12.60px;color:#46665a;transform:scaleX(0.8800);transform-origin:0 0;">22</span>
<div style="left:2px;top:678.97px;width:22.5px;height:1.0px;background:#bdbdbd;"></div>
<span style="left:6.19px;top:665px;font-size:12.60px;line-height:12.60px;color:#46665a;transform:scaleX(0.8800);transform-origin:0 0;">23</span>
<div style="left:2px;top:697.04px;width:22.5px;height:1.0px;background:#bdbdbd;"></div>
<span style="left:6.14px;top:683px;font-size:12.60px;line-height:12.60px;color:#46665a;transform:scaleX(0.8800);transform-origin:0 0;">24</span>
<div style="left:24.6px;top:196px;width:1.4px;height:477px;background:#1d6a40;"></div>
<div style="left:26px;top:265.0px;width:1174px;height:1.0px;background:#d6d6d6;"></div>
<div style="left:26px;top:283.0px;width:1174px;height:1.0px;background:#d6d6d6;"></div>
<div style="left:26px;top:301.0px;width:1174px;height:1.0px;background:#d6d6d6;"></div>
<div style="left:26px;top:335.0px;width:1174px;height:1.0px;background:#d6d6d6;"></div>
<div style="left:26px;top:353.8px;width:1174px;height:1.0px;background:#d6d6d6;"></div>
<div style="left:26px;top:371.87px;width:1174px;height:1.0px;background:#d6d6d6;"></div>
<div style="left:26px;top:389.93px;width:1174px;height:1.0px;background:#d6d6d6;"></div>
<div style="left:26px;top:408.0px;width:1174px;height:1.0px;background:#d6d6d6;"></div>
<div style="left:26px;top:426.06px;width:1174px;height:1.0px;background:#d6d6d6;"></div>
<div style="left:26px;top:444.12px;width:1174px;height:1.0px;background:#d6d6d6;"></div>
<div style="left:26px;top:462.19px;width:1174px;height:1.0px;background:#d6d6d6;"></div>
<div style="left:26px;top:480.25px;width:1174px;height:1.0px;background:#d6d6d6;"></div>
<div style="left:26px;top:498.32px;width:1174px;height:1.0px;background:#d6d6d6;"></div>
<div style="left:26px;top:516.38px;width:1174px;height:1.0px;background:#d6d6d6;"></div>
<div style="left:26px;top:534.45px;width:1174px;height:1.0px;background:#d6d6d6;"></div>
<div style="left:26px;top:552.51px;width:1174px;height:1.0px;background:#d6d6d6;"></div>
<div style="left:26px;top:570.58px;width:1174px;height:1.0px;background:#d6d6d6;"></div>
<div style="left:26px;top:588.64px;width:1174px;height:1.0px;background:#d6d6d6;"></div>
<div style="left:26px;top:606.71px;width:1174px;height:1.0px;background:#d6d6d6;"></div>
<div style="left:26px;top:624.78px;width:1174px;height:1.0px;background:#d6d6d6;"></div>
<div style="left:26px;top:642.84px;width:1174px;height:1.0px;background:#d6d6d6;"></div>
<div style="left:26px;top:660.9px;width:1174px;height:1.0px;background:#d6d6d6;"></div>
<div style="left:26px;top:678.97px;width:1174px;height:1.0px;background:#d6d6d6;"></div>
<div style="left:26px;top:697.04px;width:1174px;height:1.0px;background:#d6d6d6;"></div>
<div style="left:85.5px;top:196.5px;width:1.0px;height:476.5px;background:#d6d6d6;"></div>
<div style="left:145.7px;top:196.5px;width:1.0px;height:476.5px;background:#d6d6d6;"></div>
<div style="left:205.9px;top:196.5px;width:1.0px;height:476.5px;background:#d6d6d6;"></div>
<div style="left:266.1px;top:196.5px;width:1.0px;height:476.5px;background:#d6d6d6;"></div>
<div style="left:326.3px;top:196.5px;width:1.0px;height:476.5px;background:#d6d6d6;"></div>
<div style="left:452.5px;top:196.5px;width:1.0px;height:476.5px;background:#d6d6d6;"></div>
<div style="left:512.7px;top:196.5px;width:1.0px;height:476.5px;background:#d6d6d6;"></div>
<div style="left:572.9px;top:196.5px;width:1.0px;height:476.5px;background:#d6d6d6;"></div>
<div style="left:633.1px;top:196.5px;width:1.0px;height:476.5px;background:#d6d6d6;"></div>
<div style="left:693.3px;top:196.5px;width:1.0px;height:476.5px;background:#d6d6d6;"></div>
<div style="left:753.5px;top:196.5px;width:1.0px;height:476.5px;background:#d6d6d6;"></div>
<div style="left:813.7px;top:196.5px;width:1.0px;height:476.5px;background:#d6d6d6;"></div>
<div style="left:873.9px;top:196.5px;width:1.0px;height:476.5px;background:#d6d6d6;"></div>
<div style="left:934.1px;top:196.5px;width:1.0px;height:476.5px;background:#d6d6d6;"></div>
<div style="left:994.3px;top:196.5px;width:1.0px;height:476.5px;background:#d6d6d6;"></div>
<div style="left:1054.5px;top:196.5px;width:1.0px;height:476.5px;background:#d6d6d6;"></div>
<div style="left:1114.7px;top:196.5px;width:1.0px;height:476.5px;background:#d6d6d6;"></div>
<div style="left:1174.9px;top:196.5px;width:1.0px;height:476.5px;background:#d6d6d6;"></div>
<div style="left:1235.1px;top:196.5px;width:1.0px;height:476.5px;background:#d6d6d6;"></div>
<div style="left:327.5px;top:266.0px;width:124.5px;height:407.0px;background:#c8c8c8;"></div>
<div style="left:327.5px;top:353.8px;width:124.5px;height:1.0px;background:#b5b5b5;"></div>
<div style="left:327.5px;top:371.87px;width:124.5px;height:1.0px;background:#b5b5b5;"></div>
<div style="left:327.5px;top:389.93px;width:124.5px;height:1.0px;background:#b5b5b5;"></div>
<div style="left:327.5px;top:408.0px;width:124.5px;height:1.0px;background:#b5b5b5;"></div>
<div style="left:327.5px;top:426.06px;width:124.5px;height:1.0px;background:#b5b5b5;"></div>
<div style="left:327.5px;top:444.12px;width:124.5px;height:1.0px;background:#b5b5b5;"></div>
<div style="left:327.5px;top:462.19px;width:124.5px;height:1.0px;background:#b5b5b5;"></div>
<div style="left:327.5px;top:480.25px;width:124.5px;height:1.0px;background:#b5b5b5;"></div>
<div style="left:327.5px;top:498.32px;width:124.5px;height:1.0px;background:#b5b5b5;"></div>
<div style="left:327.5px;top:516.38px;width:124.5px;height:1.0px;background:#b5b5b5;"></div>
<div style="left:327.5px;top:534.45px;width:124.5px;height:1.0px;background:#b5b5b5;"></div>
<div style="left:327.5px;top:552.51px;width:124.5px;height:1.0px;background:#b5b5b5;"></div>
<div style="left:327.5px;top:570.58px;width:124.5px;height:1.0px;background:#b5b5b5;"></div>
<div style="left:327.5px;top:588.64px;width:124.5px;height:1.0px;background:#b5b5b5;"></div>
<div style="left:327.5px;top:606.71px;width:124.5px;height:1.0px;background:#b5b5b5;"></div>
<div style="left:327.5px;top:624.78px;width:124.5px;height:1.0px;background:#b5b5b5;"></div>
<div style="left:327.5px;top:642.84px;width:124.5px;height:1.0px;background:#b5b5b5;"></div>
<div style="left:327.5px;top:660.9px;width:124.5px;height:1.0px;background:#b5b5b5;"></div>
<div style="left:327.5px;top:678.97px;width:124.5px;height:1.0px;background:#b5b5b5;"></div>
<div style="left:327.5px;top:697.04px;width:124.5px;height:1.0px;background:#b5b5b5;"></div>
<div style="left:25px;top:265px;width:669.5px;height:1px;background:#2e2e2e;"></div>
<div style="left:25px;top:283px;width:669.5px;height:1px;background:#2e2e2e;"></div>
<div style="left:25px;top:301px;width:669.5px;height:1px;background:#2e2e2e;"></div>
<div style="left:25px;top:335px;width:669.5px;height:1px;background:#2e2e2e;"></div>
<div style="left:86px;top:196px;width:1px;height:140px;background:#2e2e2e;"></div>
<div style="left:146px;top:196px;width:1px;height:140px;background:#2e2e2e;"></div>
<div style="left:206px;top:196px;width:1px;height:140px;background:#2e2e2e;"></div>
<div style="left:266px;top:196px;width:1px;height:140px;background:#2e2e2e;"></div>
<div style="left:513px;top:196px;width:1px;height:140px;background:#2e2e2e;"></div>
<div style="left:573px;top:196px;width:1px;height:140px;background:#2e2e2e;"></div>
<div style="left:633px;top:196px;width:1px;height:140px;background:#2e2e2e;"></div>
<div style="left:693px;top:196px;width:1px;height:140px;background:#2e2e2e;"></div>
<div style="left:326px;top:196px;width:1.5px;height:477px;background:#2a7a4f;"></div>
<div style="left:452px;top:196px;width:1.5px;height:477px;background:#2a7a4f;"></div>
<div style="left:326px;top:195.5px;width:127.5px;height:1.5px;background:#217346;"></div>
<div style="left:451.2px;top:195px;width:3.8px;height:3.5px;background:#217346;"></div>
<span style="left:45.00px;top:216px;font-size:13.33px;line-height:13.33px;color:#000;font-weight:bold;">Tên</span>
<span style="left:40.04px;top:233px;font-size:13.33px;line-height:13.33px;color:#000;font-weight:bold;">hàng</span>
<span style="left:107.57px;top:216px;font-size:13.33px;line-height:13.33px;color:#000;font-weight:bold;">Số</span>
<span style="left:96.50px;top:233px;font-size:13.33px;line-height:13.33px;color:#000;font-weight:bold;">lượng</span>
<span style="left:151.14px;top:225px;font-size:13.33px;line-height:13.33px;color:#000;font-weight:bold;">Đơn giá</span>
<span style="left:219.67px;top:207px;font-size:13.33px;line-height:13.33px;color:#000;font-weight:bold;">Chiết</span>
<span style="left:220.90px;top:224px;font-size:13.33px;line-height:13.33px;color:#000;font-weight:bold;">khẩu</span>
<span style="left:226.14px;top:241px;font-size:13.33px;line-height:13.33px;color:#000;font-weight:bold;">(%)</span>
<span style="left:281.17px;top:216px;font-size:13.33px;line-height:13.33px;color:#000;font-weight:bold;">Thuế</span>
<span style="left:286.34px;top:233px;font-size:13.33px;line-height:13.33px;color:#000;font-weight:bold;">(%)</span>
<span style="left:356.54px;top:225px;font-size:13.33px;line-height:13.33px;color:#000;font-weight:bold;">Thành tiền</span>
<span style="left:459.37px;top:216px;font-size:13.33px;line-height:13.33px;color:#000;font-weight:bold;">% Giảm</span>
<span style="left:473.67px;top:233px;font-size:13.33px;line-height:13.33px;color:#000;font-weight:bold;">giá</span>
<span style="left:521.27px;top:216px;font-size:13.33px;line-height:13.33px;color:#000;font-weight:bold;">Số tiền</span>
<span style="left:527.87px;top:233px;font-size:13.33px;line-height:13.33px;color:#000;font-weight:bold;">giảm</span>
<span style="left:584.34px;top:199px;font-size:13.33px;line-height:13.33px;color:#000;font-weight:bold;">Thành</span>
<span style="left:579.17px;top:216px;font-size:13.33px;line-height:13.33px;color:#000;font-weight:bold;">tiền sau</span>
<span style="left:588.57px;top:233px;font-size:13.33px;line-height:13.33px;color:#000;font-weight:bold;">giảm</span>
<span style="left:594.07px;top:250px;font-size:13.33px;line-height:13.33px;color:#000;font-weight:bold;">giá</span>
<span style="left:644.04px;top:199px;font-size:13.33px;line-height:13.33px;color:#000;font-weight:bold;">Thành</span>
<span style="left:642.44px;top:216px;font-size:13.33px;line-height:13.33px;color:#000;font-weight:bold;">tiền có</span>
<span style="left:649.54px;top:233px;font-size:13.33px;line-height:13.33px;color:#000;font-weight:bold;">thuế</span>
<span style="left:651.40px;top:250px;font-size:13.33px;line-height:13.33px;color:#000;font-weight:bold;">VAT</span>
<span style="left:27.93px;top:268px;font-size:13.33px;line-height:13.33px;color:#000;">Bút bi</span>
<span style="left:28.93px;top:285px;font-size:13.33px;line-height:13.33px;color:#000;">Vở viết</span>
<span style="left:29.73px;top:304px;font-size:13.33px;line-height:13.33px;color:#000;">Thước</span>
<span style="left:28.13px;top:321px;font-size:13.33px;line-height:13.33px;color:#000;">kè</span>
<span style="left:128.57px;top:268px;font-size:13.33px;line-height:13.33px;color:#000;">10</span>
<span style="left:136.04px;top:285px;font-size:13.33px;line-height:13.33px;color:#000;">5</span>
<span style="left:136.04px;top:312px;font-size:13.33px;line-height:13.33px;color:#000;">8</span>
<span style="left:173.91px;top:268px;font-size:13.33px;line-height:13.33px;color:#000;">5000</span>
<span style="left:166.51px;top:285px;font-size:13.33px;line-height:13.33px;color:#000;">12000</span>
<span style="left:173.91px;top:312px;font-size:13.33px;line-height:13.33px;color:#000;">7000</span>
<span style="left:237.11px;top:268px;font-size:13.33px;line-height:13.33px;color:#000;">10%</span>
<span style="left:244.50px;top:285px;font-size:13.33px;line-height:13.33px;color:#000;">5%</span>
<span style="left:256.37px;top:312px;font-size:13.33px;line-height:13.33px;color:#000;">0</span>
<span style="left:304.70px;top:268px;font-size:13.33px;line-height:13.33px;color:#000;">8%</span>
<span style="left:304.70px;top:285px;font-size:13.33px;line-height:13.33px;color:#000;">8%</span>
<span style="left:304.70px;top:312px;font-size:13.33px;line-height:13.33px;color:#000;">8%</span>
<span style="left:413.11px;top:268px;font-size:13.33px;line-height:13.33px;color:#000;">50000</span>
<span style="left:413.11px;top:285px;font-size:13.33px;line-height:13.33px;color:#000;">60000</span>
<span style="left:413.11px;top:312px;font-size:13.33px;line-height:13.33px;color:#000;">56000</span>
<span style="left:486.47px;top:269px;font-size:12.30px;line-height:12.30px;color:#2a2a2a;">0,05</span>
<span style="left:503.50px;top:287px;font-size:12.30px;line-height:12.30px;color:#2a2a2a;">0</span>
<span style="left:503.50px;top:322px;font-size:12.30px;line-height:12.30px;color:#2a2a2a;">0</span>
<span style="left:543.16px;top:269px;font-size:12.30px;line-height:12.30px;color:#2a2a2a;">2500</span>
<span style="left:563.70px;top:287px;font-size:12.30px;line-height:12.30px;color:#2a2a2a;">0</span>
<span style="left:563.70px;top:322px;font-size:12.30px;line-height:12.30px;color:#2a2a2a;">0</span>
<span style="left:596.54px;top:269px;font-size:12.30px;line-height:12.30px;color:#2a2a2a;">47500</span>
<span style="left:596.54px;top:287px;font-size:12.30px;line-height:12.30px;color:#2a2a2a;">60000</span>
<span style="left:596.54px;top:322px;font-size:12.30px;line-height:12.30px;color:#2a2a2a;">56000</span>
<span style="left:656.74px;top:269px;font-size:12.30px;line-height:12.30px;color:#2a2a2a;">54000</span>
<span style="left:656.74px;top:287px;font-size:12.30px;line-height:12.30px;color:#2a2a2a;">64800</span>
<span style="left:656.74px;top:322px;font-size:12.30px;line-height:12.30px;color:#2a2a2a;">60480</span>
<div style="left:308.2px;top:174.2px;width:157.8px;height:3.8px;background:#f83232;"></div>
<div style="left:308.2px;top:174.2px;width:4.0px;height:467.8px;background:#f83232;"></div>
<div style="left:462px;top:174.2px;width:4px;height:467.8px;background:#f83232;"></div>
<div style="left:308.2px;top:638px;width:157.8px;height:4px;background:#f83232;"></div>
<svg style="left:0;top:0" width="1200" height="675" viewBox="0 0 1200 675"><path fill-rule="evenodd" fill="#f83232" d="M267 347.8L281.5 336.3H291.6V375.3H277.8V354.3L274.8 356.9Z M272.4 348.1L282.2 339.6H288.3V372.1H280.9V348.9L275.3 353.3Z"/><path fill="#fff" d="M272.4 348.1L282.2 339.6H288.3V372.1H280.9V348.9L275.3 353.3Z"/></svg>
<div style="left:0;top:0;width:1200px;height:2px;background:#000"></div>
<div style="left:0;top:0;width:2px;height:675px;background:#000"></div>
<div style="left:1198px;top:0;width:2px;height:675px;background:#000"></div>
<div style="left:0;top:673px;width:1200px;height:2px;background:#000"></div>
</body></html>
